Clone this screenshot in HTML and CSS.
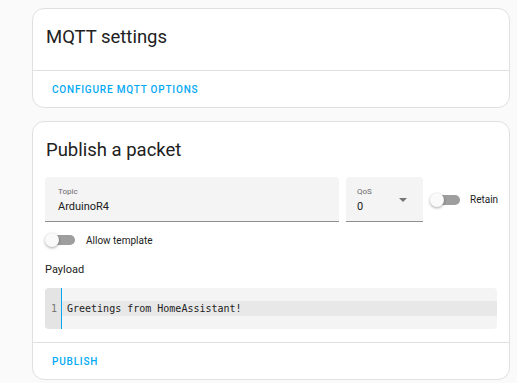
FILE: index.html
```html
<!DOCTYPE html>
<html>
<head>
	<title>MQTT settings</title>
	<link rel="stylesheet" href="styles.css">
</head>
<body>
	<div class="page">
		<div class="card">
			<div class="card-header solo">MQTT settings</div>
			<div class="card-actions">
				<button class="text-btn">Configure MQTT options</button>
			</div>
		</div>

		<div class="card">
			<div class="card-header">Publish a packet</div>
			<div class="card-content">
				<div class="field-row">
					<div class="field topic">
						<span class="field-label">Topic</span>
						<span class="field-value">ArduinoR4</span>
					</div>
					<div class="field qos">
						<span class="field-label">QoS</span>
						<span class="field-value">0</span>
						<svg class="arrow" width="8" height="4" viewBox="0 0 8 4"><path d="M0 0 L8 0 L4 4 Z" fill="#757575"/></svg>
					</div>
					<label class="switch-row retain">
						<span class="switch"><span class="knob"></span></span>
						Retain
					</label>
				</div>

				<label class="switch-row template">
					<span class="switch"><span class="knob"></span></span>
					Allow template
				</label>

				<p class="payload-label">Payload</p>

				<div class="editor">
					<div class="gutter"><span class="line-no">1</span></div>
					<div class="lines">
						<div class="code-line active">Greetings from HomeAssistant!</div>
					</div>
				</div>
			</div>
			<div class="card-actions">
				<button class="text-btn">Publish</button>
			</div>
		</div>
	</div>
</body>
</html>
```

FILE: styles.css
```css
body{
	margin: 0;
	background-color: #fafafa;
	font-family: Roboto, "Liberation Sans", sans-serif;
	color: #212121;
}
.page{
	width: 478px;
	padding: 8px 0 0 32px;
	display: flex;
	flex-direction: column;
	gap: 13px;
}
.card{
	background-color: #ffffff;
	border: 1px solid #e0e0e0;
	border-radius: 12px;
}
.card-header{
	font-size: 18.5px;
	line-height: 28px;
	padding: 14px 13px 13px;
}
.card-header.solo{
	padding-bottom: 19px;
}
.card-actions{
	border-top: 1px solid #e0e0e0;
	height: 36px;
	display: flex;
	align-items: center;
	padding: 0 11px;
}
.text-btn{
	background: none;
	border: none;
	font-family: Roboto, "Liberation Sans", sans-serif;
	font-weight: 500;
	font-size: 10px;
	letter-spacing: 0.8px;
	text-transform: uppercase;
	color: #03a9f4;
	padding: 6px 8px;
}
.card-content{
	padding: 0 12px 13px;
}
.field-row{
	display: flex;
	align-items: center;
	gap: 7px;
}
.field{
	position: relative;
	flex-shrink: 0;
	height: 44px;
	background-color: #f4f4f4;
	border-bottom: 1px solid #8f8f8f;
	border-radius: 4px 4px 0 0;
	display: flex;
	flex-direction: column;
	padding: 0 12px;
}
.topic{
	width: 269px;
	padding-left: 13px;
}
.qos{
	width: 54px;
	padding-left: 11px;
}
.field-label{
	font-size: 8px;
	color: #6b6b6b;
	margin-top: 10px;
	line-height: 10px;
}
.field-value{
	font-size: 11px;
	line-height: 14px;
	margin-top: 3px;
}
.arrow{
	position: absolute;
	right: 16px;
	top: 21px;
}
.switch-row{
	display: flex;
	align-items: center;
	font-size: 10px;
	gap: 10px;
}
.template{
	height: 28px;
	margin-top: 4px;
	gap: 11px;
}
.switch{
	position: relative;
	flex-shrink: 0;
	width: 30px;
	height: 10px;
	display: inline-block;
}
.switch::before{
	content: "";
	position: absolute;
	left: 7px;
	right: 0;
	top: 0;
	height: 10px;
	border-radius: 5px;
	background-color: #9e9e9e;
}
.knob{
	position: absolute;
	left: 0;
	top: -2px;
	width: 14px;
	height: 14px;
	border-radius: 50%;
	background-color: #fafafa;
	box-shadow: 0 1px 3px rgba(0,0,0,0.35);
}
.payload-label{
	font-size: 11px;
	line-height: 16px;
	margin: 8px 0 10px;
}
.editor{
	display: flex;
	background-color: #f4f4f4;
	border-radius: 4px;
	overflow: hidden;
}
.gutter{
	width: 16px;
	background-color: #e4e4e4;
	border-right: 1px solid #03a9f4;
	padding: 13px 0;
	text-align: right;
}
.line-no{
	display: block;
	font-family: "DejaVu Sans Mono", monospace;
	font-size: 10px;
	line-height: 15px;
	color: #777777;
	padding-right: 4px;
}
.lines{
	flex: 1;
	padding: 13px 0;
}
.code-line{
	font-family: "DejaVu Sans Mono", monospace;
	font-size: 10px;
	line-height: 15px;
	padding-left: 5px;
	color: #222222;
}
.code-line.active{
	background-color: #e8e8e8;
}
```
